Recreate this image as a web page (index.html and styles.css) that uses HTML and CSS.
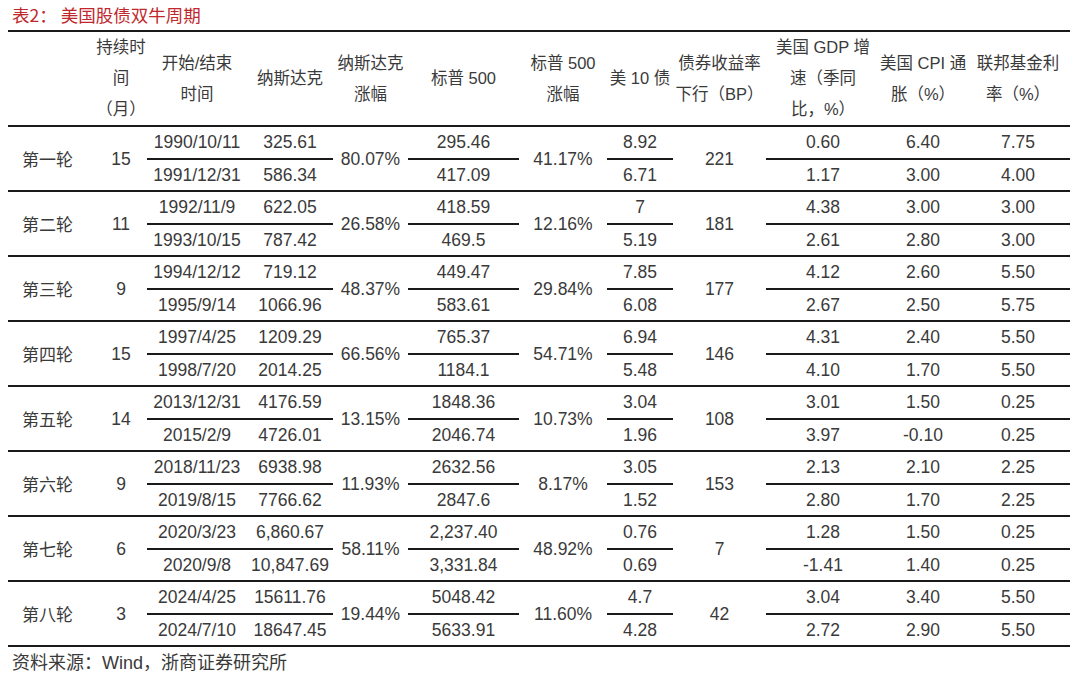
FILE: index.html
```html
<!DOCTYPE html>
<html lang="zh-CN">
<head>
<meta charset="utf-8">
<title>美国股债双牛周期</title>
<link rel="stylesheet" href="styles.css">
</head>
<body>
<div class="page">
  <div class="title">表2：<span class="gap"></span>美国股债双牛周期</div>
  <table class="tbl">
    <colgroup>
      <col class="c1"><col class="c2"><col class="c3"><col class="c4"><col class="c5"><col class="c6">
      <col class="c7"><col class="c8"><col class="c9"><col class="c10"><col class="c11"><col class="c12">
    </colgroup>
    <thead>
      <tr>
        <th></th>
        <th>持续时<br>间<br>（月）</th>
        <th>开始/结束<br>时间</th>
        <th>纳斯达克</th>
        <th>纳斯达克<br>涨幅</th>
        <th>标普 500</th>
        <th>标普 500<br>涨幅</th>
        <th>美 10 债</th>
        <th>债券收益率<br>下行（BP）</th>
        <th>美国 GDP 增<br>速（季同<br>比，%）</th>
        <th>美国 CPI 通<br>胀（%）</th>
        <th>联邦基金利<br>率（%）</th>
      </tr>
    </thead>
    <tbody>
      <tr class="a"><td class="r name" rowspan="2">第一轮</td><td class="r" rowspan="2">15</td><td>1990/10/11</td><td>325.61</td><td class="r" rowspan="2">80.07%</td><td>295.46</td><td class="r" rowspan="2">41.17%</td><td>8.92</td><td class="r" rowspan="2">221</td><td>0.60</td><td>6.40</td><td>7.75</td></tr>
      <tr class="b"><td>1991/12/31</td><td>586.34</td><td>417.09</td><td>6.71</td><td>1.17</td><td>3.00</td><td>4.00</td></tr>

      <tr class="a"><td class="r name" rowspan="2">第二轮</td><td class="r" rowspan="2">11</td><td>1992/11/9</td><td>622.05</td><td class="r" rowspan="2">26.58%</td><td>418.59</td><td class="r" rowspan="2">12.16%</td><td>7</td><td class="r" rowspan="2">181</td><td>4.38</td><td>3.00</td><td>3.00</td></tr>
      <tr class="b"><td>1993/10/15</td><td>787.42</td><td>469.5</td><td>5.19</td><td>2.61</td><td>2.80</td><td>3.00</td></tr>

      <tr class="a"><td class="r name" rowspan="2">第三轮</td><td class="r" rowspan="2">9</td><td>1994/12/12</td><td>719.12</td><td class="r" rowspan="2">48.37%</td><td>449.47</td><td class="r" rowspan="2">29.84%</td><td>7.85</td><td class="r" rowspan="2">177</td><td>4.12</td><td>2.60</td><td>5.50</td></tr>
      <tr class="b"><td>1995/9/14</td><td>1066.96</td><td>583.61</td><td>6.08</td><td>2.67</td><td>2.50</td><td>5.75</td></tr>

      <tr class="a"><td class="r name" rowspan="2">第四轮</td><td class="r" rowspan="2">15</td><td>1997/4/25</td><td>1209.29</td><td class="r" rowspan="2">66.56%</td><td>765.37</td><td class="r" rowspan="2">54.71%</td><td>6.94</td><td class="r" rowspan="2">146</td><td>4.31</td><td>2.40</td><td>5.50</td></tr>
      <tr class="b"><td>1998/7/20</td><td>2014.25</td><td>1184.1</td><td>5.48</td><td>4.10</td><td>1.70</td><td>5.50</td></tr>

      <tr class="a"><td class="r name" rowspan="2">第五轮</td><td class="r" rowspan="2">14</td><td>2013/12/31</td><td>4176.59</td><td class="r" rowspan="2">13.15%</td><td>1848.36</td><td class="r" rowspan="2">10.73%</td><td>3.04</td><td class="r" rowspan="2">108</td><td>3.01</td><td>1.50</td><td>0.25</td></tr>
      <tr class="b"><td>2015/2/9</td><td>4726.01</td><td>2046.74</td><td>1.96</td><td>3.97</td><td>-0.10</td><td>0.25</td></tr>

      <tr class="a"><td class="r name" rowspan="2">第六轮</td><td class="r" rowspan="2">9</td><td>2018/11/23</td><td>6938.98</td><td class="r" rowspan="2">11.93%</td><td>2632.56</td><td class="r" rowspan="2">8.17%</td><td>3.05</td><td class="r" rowspan="2">153</td><td>2.13</td><td>2.10</td><td>2.25</td></tr>
      <tr class="b"><td>2019/8/15</td><td>7766.62</td><td>2847.6</td><td>1.52</td><td>2.80</td><td>1.70</td><td>2.25</td></tr>

      <tr class="a"><td class="r name" rowspan="2">第七轮</td><td class="r" rowspan="2">6</td><td>2020/3/23</td><td>6,860.67</td><td class="r" rowspan="2">58.11%</td><td>2,237.40</td><td class="r" rowspan="2">48.92%</td><td>0.76</td><td class="r" rowspan="2">7</td><td>1.28</td><td>1.50</td><td>0.25</td></tr>
      <tr class="b"><td>2020/9/8</td><td>10,847.69</td><td>3,331.84</td><td>0.69</td><td>-1.41</td><td>1.40</td><td>0.25</td></tr>

      <tr class="a"><td class="r name" rowspan="2">第八轮</td><td class="r" rowspan="2">3</td><td>2024/4/25</td><td>15611.76</td><td class="r" rowspan="2">19.44%</td><td>5048.42</td><td class="r" rowspan="2">11.60%</td><td>4.7</td><td class="r" rowspan="2">42</td><td>3.04</td><td>3.40</td><td>5.50</td></tr>
      <tr class="b"><td>2024/7/10</td><td>18647.45</td><td>5633.91</td><td>4.28</td><td>2.72</td><td>2.90</td><td>5.50</td></tr>
    </tbody>
  </table>
  <div class="source">资料来源：Wind，浙商证券研究所</div>
</div>
</body>
</html>
```
FILE: styles.css
```css
* { box-sizing: border-box; }
body {
  margin: 0;
  background: #ffffff;
  color: #3a3a3a;
  font-family: "Liberation Sans", "Noto Sans CJK SC", sans-serif;
}
.page {
  width: 1080px;
  padding: 0 10px 0 8px;
}
.title {
  height: 30px;
  line-height: 30px;
  padding-left: 4px;
  font-size: 17.5px;
  color: #c0282d;
  font-family: "Noto Sans CJK SC", sans-serif;
}
.title .gap {
  display: inline-block;
  width: 4px;
}
.tbl {
  width: 1062px;
  table-layout: fixed;
  border-collapse: collapse;
  border-top: 2px solid #1a1a1a;
  border-bottom: 2px solid #1a1a1a;
}
.c1 { width: 87px; }
.c2 { width: 52px; }
.c3 { width: 100px; }
.c4 { width: 86px; }
.c5 { width: 75px; }
.c6 { width: 111px; }
.c7 { width: 88px; }
.c8 { width: 66px; }
.c9 { width: 93px; }
.c10 { width: 114px; }
.c11 { width: 86px; }
.c12 { width: 104px; }
.tbl th {
  height: 95px;
  padding: 0;
  font-weight: normal;
  font-size: 16.5px;
  line-height: 31px;
  white-space: nowrap;
  text-align: center;
  vertical-align: middle;
  border-bottom: 2px solid #1a1a1a;
  font-family: "Liberation Sans", "Noto Sans CJK SC", sans-serif;
}
.tbl td {
  height: 32.5px;
  padding: 0;
  font-size: 17.5px;
  line-height: 20px;
  text-align: center;
  vertical-align: middle;
  white-space: nowrap;
}
.tbl tr.a td { border-bottom: 2px solid #1a1a1a; }
.tbl tr.b td, .tbl td.r { border-bottom: 2px solid #1a1a1a; }
.tbl td.name {
  text-align: left;
  padding-left: 14px;
  font-size: 17px;
  font-family: "Noto Sans CJK SC", sans-serif;
}
.source {
  height: 32px;
  line-height: 32px;
  padding-left: 4px;
  font-size: 18px;
  color: #3a3a3a;
  font-family: "Liberation Sans", "Noto Sans CJK SC", sans-serif;
}
```
